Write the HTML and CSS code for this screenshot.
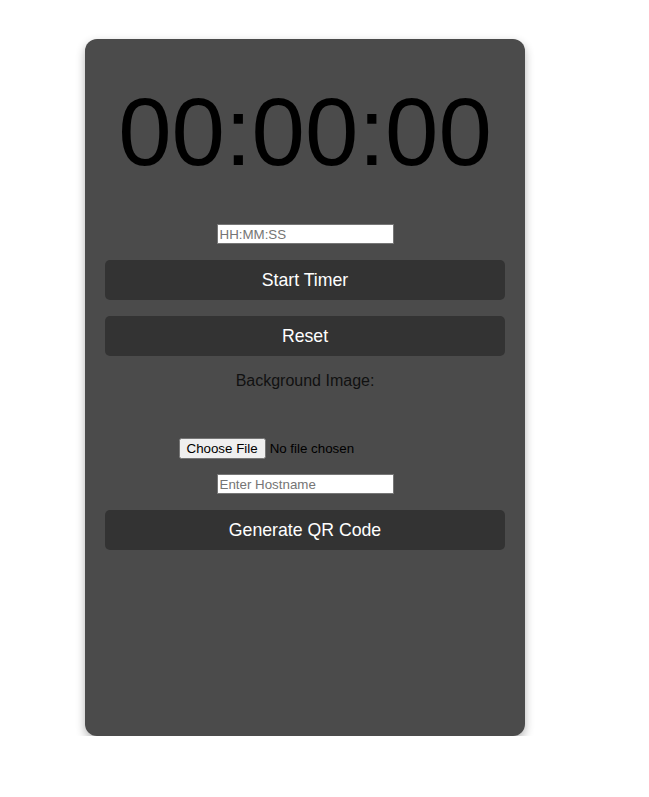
FILE: index.html
```html
<!DOCTYPE html>
<html lang="en">
<head>
<meta charset="utf-8">
<title>Timer</title>
<link rel="stylesheet" href="styles.css">
</head>
<body>
<div class="card">
  <div class="timer">00:00:00</div>
  <input class="field field-time" type="text" placeholder="HH:MM:SS">
  <button class="btn btn-start">Start Timer</button>
  <button class="btn btn-reset">Reset</button>
  <label class="bg-label">Background Image:</label>
  <input class="file" type="file">
  <input class="field field-host" type="text" placeholder="Enter Hostname">
  <button class="btn btn-qr">Generate QR Code</button>
</div>
</body>
</html>
```
FILE: styles.css
```css
html, body {
  margin: 0;
  padding: 0;
  background: #ffffff;
}
body {
  font-family: "Liberation Sans", Arial, sans-serif;
  padding: 39px 0 0 85px;
}
.card {
  width: 440px;
  height: 697px;
  box-sizing: border-box;
  background: #4b4b4b;
  border-radius: 12px;
  box-shadow: 0 4px 10px rgba(0, 0, 0, 0.3);
  padding: 20px;
  display: flex;
  flex-direction: column;
  align-items: center;
}
.timer {
  font-size: 96px;
  color: #000;
  margin: 18px 0 37px;
  line-height: normal;
}
.field {
  width: 177px;
  height: 20px;
  box-sizing: border-box;
  border: 1px solid #767676;
  padding: 1px 2px;
  font-family: "Liberation Sans", Arial, sans-serif;
  font-size: 13.33px;
  background: #fff;
  color: #000;
  margin: 0;
}
.field::placeholder {
  color: #757575;
}
.btn {
  width: 100%;
  height: 40px;
  border: none;
  border-radius: 5px;
  background: #333333;
  color: #ffffff;
  font-family: "Liberation Sans", Arial, sans-serif;
  font-size: 17.7px;
  margin: 16px 0 0;
  padding: 0;
}
.bg-label {
  font-size: 16px;
  color: #111;
  margin-top: 16px;
  line-height: 18px;
}
.file {
  margin-top: 48px;
  font-family: "Liberation Sans", Arial, sans-serif;
  font-size: 13.33px;
  color: #000;
}
.field-host {
  margin-top: 15px;
}
```
